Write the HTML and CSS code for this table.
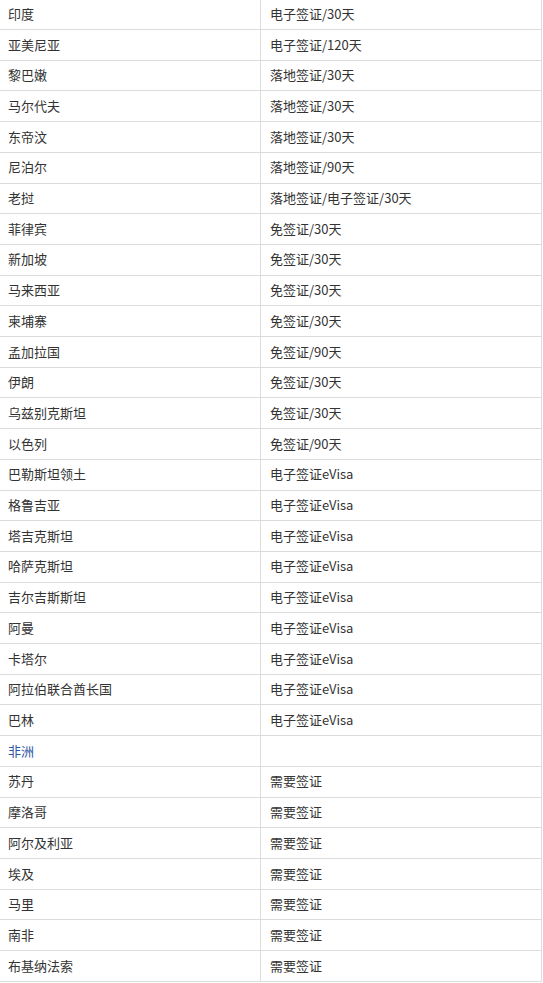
FILE: index.html
```html
<!DOCTYPE html>
<html lang="zh-CN">
<head>
<meta charset="utf-8">
<title>签证政策</title>
<link rel="stylesheet" href="styles.css">
</head>
<body>
<table class="visa-table">
  <colgroup><col class="c1"><col class="c2"></colgroup>
  <tbody>
    <tr><td>印度</td><td>电子签证/30天</td></tr>
    <tr><td>亚美尼亚</td><td>电子签证/120天</td></tr>
    <tr><td>黎巴嫩</td><td>落地签证/30天</td></tr>
    <tr><td>马尔代夫</td><td>落地签证/30天</td></tr>
    <tr><td>东帝汶</td><td>落地签证/30天</td></tr>
    <tr><td>尼泊尔</td><td>落地签证/90天</td></tr>
    <tr><td>老挝</td><td>落地签证/电子签证/30天</td></tr>
    <tr><td>菲律宾</td><td>免签证/30天</td></tr>
    <tr><td>新加坡</td><td>免签证/30天</td></tr>
    <tr><td>马来西亚</td><td>免签证/30天</td></tr>
    <tr><td>柬埔寨</td><td>免签证/30天</td></tr>
    <tr><td>孟加拉国</td><td>免签证/90天</td></tr>
    <tr><td>伊朗</td><td>免签证/30天</td></tr>
    <tr><td>乌兹别克斯坦</td><td>免签证/30天</td></tr>
    <tr><td>以色列</td><td>免签证/90天</td></tr>
    <tr><td>巴勒斯坦领土</td><td>电子签证eVisa</td></tr>
    <tr><td>格鲁吉亚</td><td>电子签证eVisa</td></tr>
    <tr><td>塔吉克斯坦</td><td>电子签证eVisa</td></tr>
    <tr><td>哈萨克斯坦</td><td>电子签证eVisa</td></tr>
    <tr><td>吉尔吉斯斯坦</td><td>电子签证eVisa</td></tr>
    <tr><td>阿曼</td><td>电子签证eVisa</td></tr>
    <tr><td>卡塔尔</td><td>电子签证eVisa</td></tr>
    <tr><td>阿拉伯联合酋长国</td><td>电子签证eVisa</td></tr>
    <tr><td>巴林</td><td>电子签证eVisa</td></tr>
    <tr><td class="region">非洲</td><td></td></tr>
    <tr><td>苏丹</td><td>需要签证</td></tr>
    <tr><td>摩洛哥</td><td>需要签证</td></tr>
    <tr><td>阿尔及利亚</td><td>需要签证</td></tr>
    <tr><td>埃及</td><td>需要签证</td></tr>
    <tr><td>马里</td><td>需要签证</td></tr>
    <tr><td>南非</td><td>需要签证</td></tr>
    <tr><td>布基纳法索</td><td>需要签证</td></tr>
  </tbody>
</table>
</body>
</html>
```

FILE: styles.css
```css
html, body {
  margin: 0;
  padding: 0;
  background: #fff;
}
body {
  font-family: "Noto Sans CJK SC", "Noto Sans", "Liberation Sans", sans-serif;
  font-size: 13px;
  color: #333;
}
.visa-table {
  border-collapse: collapse;
  table-layout: fixed;
  width: 542px;
  margin: -1.7px 0 0 -1px;
}
.visa-table .c1 { width: 261px; }
.visa-table .c2 { width: 281px; }
.visa-table td {
  border: 1px solid #dcdcdc;
  padding: 4.5px 8px 4.5px 8px;
  line-height: 20.7px;
  vertical-align: middle;
  white-space: nowrap;
}
.visa-table td + td {
  padding-left: 9px;
}
.visa-table .region {
  color: #2b56a6;
}
```
